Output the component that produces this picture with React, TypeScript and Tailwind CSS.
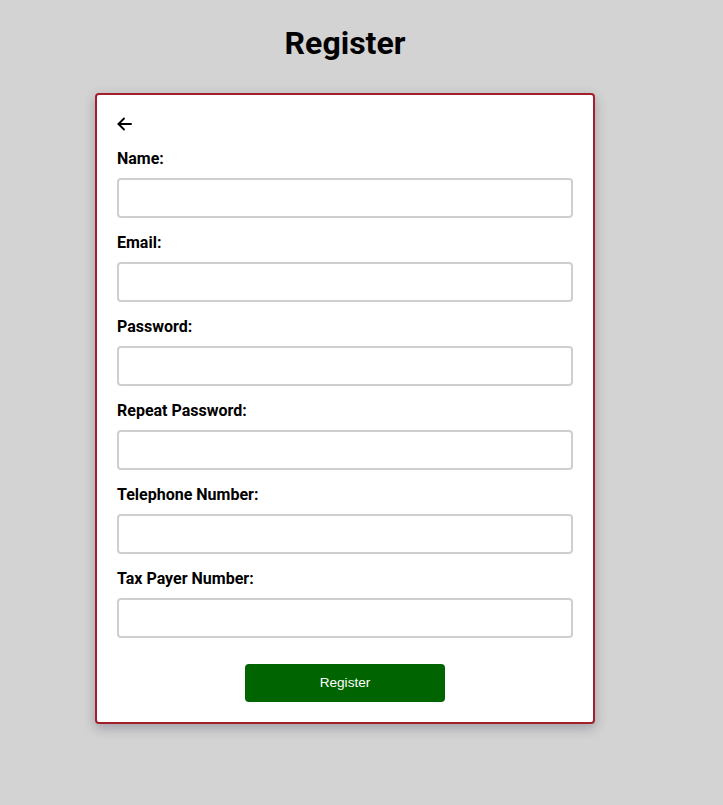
const fields = [
  'Name:',
  'Email:',
  'Password:',
  'Repeat Password:',
  'Telephone Number:',
  'Tax Payer Number:',
];

function BackArrow() {
  return (
    <svg width="16" height="18" viewBox="0 0 16 18" fill="none" stroke="#000" strokeWidth="1.9" strokeLinecap="round" strokeLinejoin="round">
      <path d="M1.5 9H14" />
      <path d="M7 3.5L1.5 9L7 14.5" />
    </svg>
  );
}

export default function App() {
  return (
    <div className="min-h-[805px] bg-[#d3d3d3] pt-[25px] font-['Roboto',sans-serif]">
      <div className="ml-[95px] w-[500px]">
        <h1 className="text-center text-[32px] font-bold leading-[37.5px] text-black">Register</h1>

        <div className="mt-[30.5px] rounded-[4px] border-2 border-[#a31f2c] bg-white p-[20px] shadow-[0_4px_12px_rgba(40,40,70,0.3)]">
          <div className="h-[18px] mb-[16px]">
            <BackArrow />
          </div>

          <form onSubmit={(e) => e.preventDefault()}>
            {fields.map((label) => (
              <div key={label} className="mb-[15px]">
                <label className="block text-[16px] font-bold leading-[19px] text-black mb-[10px]">{label}</label>
                <input
                  type={label.includes('Password') ? 'password' : 'text'}
                  className="block h-[40px] w-full rounded-[4px] border-2 border-[#cfcfcf] bg-white px-2 outline-none"
                />
              </div>
            ))}

            <div className="flex justify-center pt-[11px]">
              <button
                type="submit"
                className="h-[38px] w-[200px] rounded-[4px] bg-[#006400] text-[13.6px] text-white font-['Liberation_Sans',Arial,sans-serif]"
              >
                Register
              </button>
            </div>
          </form>
        </div>
      </div>
    </div>
  );
}
